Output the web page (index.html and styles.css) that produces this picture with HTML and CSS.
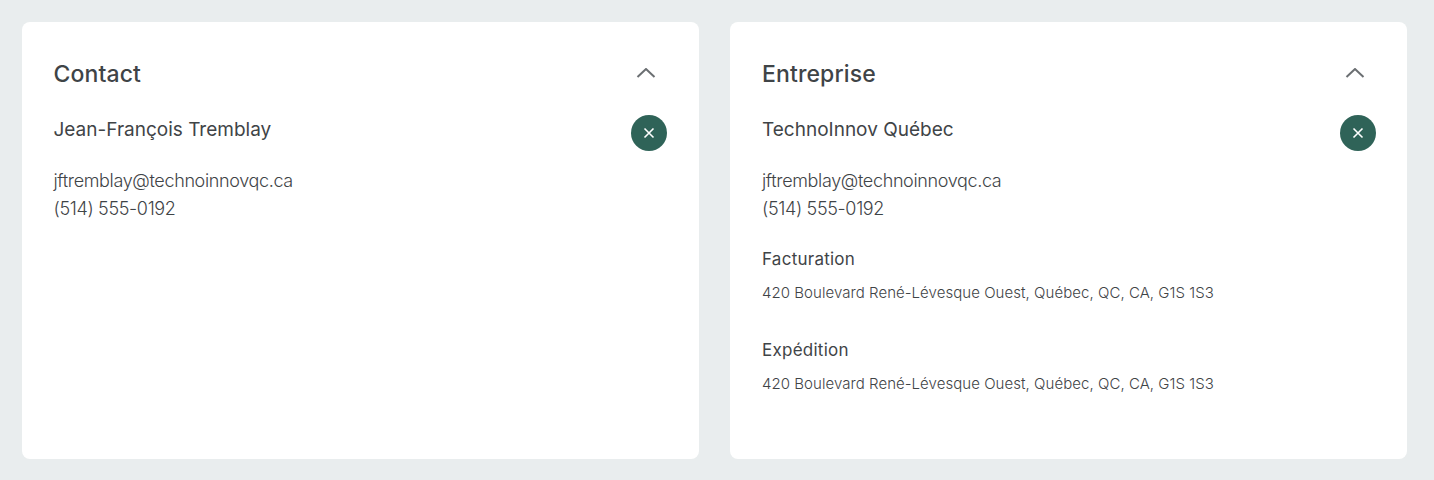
FILE: index.html
```html
<!DOCTYPE html>
<html lang="fr">
<head>
  <meta charset="UTF-8">
  <title>Contact et entreprise</title>
  <link rel="stylesheet" href="styles.css">
</head>
<body>

<div class="container">
  <!-- Contact -->
  <section class="card">
    <div class="card-head">
      <h2>Contact</h2>
      <button class="toggle" aria-label="Réduire">
        <svg width="20" height="10" viewBox="0 0 20 10"><path d="M1.5 9 L10 1 L18.5 9"/></svg>
      </button>
    </div>
    <div class="row">
      <h3>Jean-François Tremblay</h3>
      <button class="remove" aria-label="Retirer">
        <svg width="12" height="12" viewBox="0 0 12 12"><path d="M1.5 1.5 L10.5 10.5 M10.5 1.5 L1.5 10.5"/></svg>
      </button>
    </div>
    <div class="infos">
      <div>jftremblay@technoinnovqc.ca</div>
      <div>(514) 555-0192</div>
    </div>
  </section>

  <!-- Entreprise -->
  <section class="card">
    <div class="card-head">
      <h2>Entreprise</h2>
      <button class="toggle" aria-label="Réduire">
        <svg width="20" height="10" viewBox="0 0 20 10"><path d="M1.5 9 L10 1 L18.5 9"/></svg>
      </button>
    </div>
    <div class="row">
      <h3>TechnoInnov Québec</h3>
      <button class="remove" aria-label="Retirer">
        <svg width="12" height="12" viewBox="0 0 12 12"><path d="M1.5 1.5 L10.5 10.5 M10.5 1.5 L1.5 10.5"/></svg>
      </button>
    </div>
    <div class="infos">
      <div>jftremblay@technoinnovqc.ca</div>
      <div>(514) 555-0192</div>
    </div>
    <div class="adresse">
      <h4>Facturation</h4>
      <p>420 Boulevard René-Lévesque Ouest, Québec, QC, CA, G1S 1S3</p>
    </div>
    <div class="adresse">
      <h4>Expédition</h4>
      <p>420 Boulevard René-Lévesque Ouest, Québec, QC, CA, G1S 1S3</p>
    </div>
  </section>
</div>

</body>
</html>
```

FILE: styles.css
```css
* {
  box-sizing: border-box;
}

body {
  margin: 0;
  height: 480px;
  overflow: hidden;
  font-family: 'Inter', sans-serif;
  background: #e9edee;
  color: #3f4447;
}

.container {
  display: grid;
  grid-template-columns: 1fr 1fr;
  gap: 31px;
  padding: 22px 27px 21px 22px;
  height: 100%;
}

.card {
  background: white;
  border-radius: 8px;
  padding: 35px 31px 0 32px;
}

.card:first-child {
  padding-left: 31.5px;
  padding-right: 32px;
}

.card-head {
  display: flex;
  justify-content: space-between;
  align-items: center;
  height: 34px;
}

.card-head h2 {
  margin: 0;
  font-size: 23px;
  font-weight: 450;
  letter-spacing: 0.12px;
}

.toggle {
  border: none;
  background: none;
  padding: 0;
  margin-right: 11.5px;
  display: flex;
}

.toggle svg {
  margin-top: -3px;
  fill: none;
  stroke: #6b6f72;
  stroke-width: 2;
}

.row {
  display: flex;
  justify-content: space-between;
  margin-top: 24px;
}

.row h3 {
  margin: 2px 0 0;
  font-size: 19px;
  line-height: 26px;
  font-weight: 400;
}

.remove {
  width: 36px;
  height: 36px;
  border: none;
  border-radius: 50%;
  background: #2f6358;
  display: flex;
  align-items: center;
  justify-content: center;
  padding: 0;
}

.remove svg {
  fill: none;
  stroke: white;
  stroke-width: 1.6;
}

.infos {
  margin-top: 16px;
  font-size: 18px;
  line-height: 28px;
  font-weight: 300;
  letter-spacing: -0.35px;
}

.adresse {
  margin-bottom: 33px;
}

.infos + .adresse {
  margin-top: 24px;
}

.adresse h4 {
  margin: 0;
  font-size: 17px;
  line-height: 24px;
  font-weight: 400;
  letter-spacing: 0.25px;
}

.adresse p {
  margin: 10px 0 0;
  font-size: 15px;
  line-height: 24px;
  font-weight: 300;
  letter-spacing: 0.05px;
}
```
